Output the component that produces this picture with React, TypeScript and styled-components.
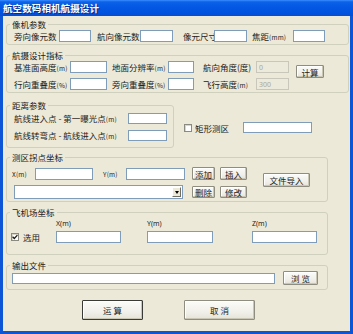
import React from 'react';
import styled, { createGlobalStyle } from 'styled-components';

const Global = createGlobalStyle`
  html, body { margin: 0; padding: 0; background: #ffffff; }
  body { font-family: "Noto Sans CJK SC", "Noto Sans", sans-serif; }
  * { box-sizing: border-box; }
`;

const Window = styled.div`
  width: 353px;
  height: 334px;
  background: #0b55d6;
  display: flex;
  flex-direction: column;
  overflow: hidden;
  position: relative;
`;

const TitleBar = styled.div`
  height: 16px;
  flex: none;
  background: linear-gradient(to bottom, #3b8dff 0%, #0b62e8 12%, #0457e3 45%, #0052df 80%, #0a4bd0 100%);
  color: #ffffff;
  font-size: 9.5px;
  font-weight: 700;
  line-height: 16px;
  padding-left: 3px;
  text-shadow: 1px 1px 0 #0a2a8a;
  letter-spacing: 0.1px;
`;

const Body = styled.div`
  flex: 1;
  margin: 0 3px 3px 3px;
  background: #ece9d8;
  padding: 3px 0 0 3px;
  display: flex;
  flex-direction: column;
  font-size: 8.5px;
  color: #222;
`;

const Group = styled.fieldset<{ $w: number; $mt?: number }>`
  width: ${p => p.$w}px;
  margin: ${p => p.$mt ?? 0}px 0 0 0;
  padding: 0;
  min-width: 0;
  border: 1px solid #d0d0bf;
  border-radius: 3px;
  flex: none;
`;

const Legend = styled.legend`
  font-size: 8.5px;
  line-height: 10px;
  padding: 0 2px;
  margin-left: 3px;
  color: #222;
`;

const Row = styled.div<{ $pt?: number; $pb?: number; $pl?: number; $h?: number }>`
  display: flex;
  align-items: center;
  padding: ${p => p.$pt ?? 0}px 0 ${p => p.$pb ?? 0}px ${p => p.$pl ?? 0}px;
  ${p => (p.$h ? `height: ${p.$h}px; box-sizing: content-box;` : '')}
`;

const Label = styled.span<{ $w?: number; $pl?: number; $ml?: number }>`
  ${p => (p.$w ? `width: ${p.$w}px;` : '')}
  padding-left: ${p => p.$pl ?? 0}px;
  margin-left: ${p => p.$ml ?? 0}px;
  flex: none;
  white-space: nowrap;
  line-height: 10px;
  font-size: 8.5px;
`;

const Unit = styled.span`
  font-size: 6.5px;
  letter-spacing: 0.2px;
`;

const Field = styled.input<{ $w: number; $h?: number; $ml?: number }>`
  width: ${p => p.$w}px;
  height: ${p => p.$h ?? 12}px;
  margin: 0 0 0 ${p => p.$ml ?? 0}px;
  padding: 0 2px;
  border: 1px solid #7f9db9;
  background: #ffffff;
  font-family: "Noto Sans", sans-serif;
  font-size: 7px;
  color: #000;
  flex: none;
  outline: none;
  &:disabled {
    background: #ebeadb;
    border-color: #c9c7ba;
    color: #aca899;
  }
`;

const Button = styled.button<{ $w: number; $h: number; $ml?: number; $mt?: number; $default?: boolean }>`
  width: ${p => p.$w}px;
  height: ${p => p.$h}px;
  margin: ${p => p.$mt ?? 0}px 0 0 ${p => p.$ml ?? 0}px;
  padding: 0;
  flex: none;
  font-family: inherit;
  font-size: 8.5px;
  line-height: 10px;
  color: #222;
  background: linear-gradient(to bottom, #fbfbf8 0%, #f1f0ea 60%, #e6e4d8 100%);
  border: 1px solid ${p => (p.$default ? '#3a3a36' : '#8f8d80')};
  border-radius: 1px;
  box-shadow: inset -1px -1px 0 #c9c6b6, inset 1px 1px 0 #ffffff;
  align-self: ${p => (p.$mt !== undefined ? 'flex-start' : 'center')};
`;

const Grid2 = styled.div`
  display: grid;
  grid-template-columns: 56px 37px 61px 26px 62px 33px;
  grid-auto-rows: 12px;
  row-gap: 5px;
  align-items: center;
`;

const Split = styled.div`
  display: flex;
  align-items: flex-start;
`;

const Side = styled.div<{ $mt: number; $ml: number }>`
  display: flex;
  align-items: center;
  height: 11px;
  margin: ${p => p.$mt}px 0 0 ${p => p.$ml}px;
`;

const Stack = styled.div<{ $gap: number }>`
  display: flex;
  flex-direction: column;
  gap: ${p => p.$gap}px;
`;

const CheckBox = styled.span<{ $ml?: number }>`
  width: 8px;
  height: 8px;
  margin-left: ${p => p.$ml ?? 0}px;
  flex: none;
  background: #ffffff;
  border: 1px solid #8a8a80;
  box-shadow: inset 1px 1px 0 #d8d6ca;
  display: flex;
  align-items: center;
  justify-content: center;
`;

const Combo = styled.div<{ $w: number; $ml?: number }>`
  width: ${p => p.$w}px;
  height: 14px;
  margin-left: ${p => p.$ml ?? 0}px;
  flex: none;
  background: #ffffff;
  border: 1px solid #7f9db9;
  display: flex;
  justify-content: flex-end;
  padding: 1px;
`;

const ComboArrow = styled.div`
  width: 9px;
  height: 100%;
  background: #ece9d8;
  border: 1px solid;
  border-color: #ffffff #716f64 #716f64 #ffffff;
  display: flex;
  align-items: center;
  justify-content: center;
  &::after {
    content: '';
    border-left: 2.5px solid transparent;
    border-right: 2.5px solid transparent;
    border-top: 3px solid #000;
  }
`;

const Col = styled.div<{ $ml: number }>`
  display: flex;
  flex-direction: column;
  gap: 2px;
  margin-left: ${p => p.$ml}px;
`;

const ColLabel = styled.span`
  font-size: 7px;
  line-height: 10px;
  font-family: "Noto Sans", sans-serif;
`;

const CheckWrap = styled.div`
  display: flex;
  align-items: center;
  height: 12px;
  align-self: flex-end;
`;

const Footer = styled.div`
  display: flex;
  padding-left: 76px;
  margin-top: 10px;
`;

const Check = () => (
  <svg width="6" height="6" viewBox="0 0 6 6">
    <path d="M0.6 2.8 L2.3 4.5 L5.4 1.1" fill="none" stroke="#1a1a1a" strokeWidth="1.3" />
  </svg>
);

const U = ({ children }: { children: React.ReactNode }) => <Unit>{children}</Unit>;

export default function App() {
  return (
    <>
      <Global />
      <Window>
        <TitleBar>航空数码相机航摄设计</TitleBar>
        <Body>
          <Group $w={343}>
            <Legend>像机参数</Legend>
            <Row $pt={1} $pb={2} $pl={7}>
              <Label $w={45}>旁向像元数</Label>
              <Field $w={32} />
              <Label $w={43} $ml={6}>航向像元数</Label>
              <Field $w={33} />
              <Label $w={31} $ml={10}>像元尺寸</Label>
              <Field $w={33} />
              <Label $w={41} $ml={5}>焦距<U>(mm)</U></Label>
              <Field $w={32} />
            </Row>
          </Group>

          <Group $w={343} $mt={5}>
            <Legend>航摄设计指标</Legend>
            <Row $pt={1} $pb={2} $pl={7}>
              <Grid2>
                <Label>基准面高度<U>(m)</U></Label>
                <Field $w={37} />
                <Label $pl={5}>地面分辨率<U>(m)</U></Label>
                <Field $w={26} />
                <Label $pl={9}>航向角度(度)</Label>
                <Field $w={33} disabled defaultValue="0" />
                <Label>行向重叠度<U>(%)</U></Label>
                <Field $w={37} />
                <Label $pl={5}>旁向重叠度<U>(%)</U></Label>
                <Field $w={26} />
                <Label $pl={9}>飞行高度<U>(m)</U></Label>
                <Field $w={33} disabled defaultValue="300" />
              </Grid2>
              <Button $w={28} $h={13} $ml={7} $mt={4}>计算</Button>
            </Row>
          </Group>

          <Split>
            <Group $w={168} $mt={7}>
              <Legend>距离参数</Legend>
              <Stack $gap={6} style={{ padding: '3px 0 6px 7px' }}>
                <Row>
                  <Label $w={114}>航线进入点 - 第一曝光点<U>(m)</U></Label>
                  <Field $w={39} $h={11} />
                </Row>
                <Row>
                  <Label $w={114}>航线转弯点 - 航线进入点<U>(m)</U></Label>
                  <Field $w={39} $h={11} />
                </Row>
              </Stack>
            </Group>
            <Side $mt={29} $ml={10}>
              <CheckBox />
              <Label $w={48} $ml={3}>矩形测区</Label>
              <Field $w={69} $h={11} />
            </Side>
          </Split>

          <Group $w={322} $mt={4}>
            <Legend>测区拐点坐标</Legend>
            <Split>
              <Stack $gap={5} style={{ padding: '5px 0 2px 5px' }}>
                <Row $h={13}>
                  <Label $w={23}><U>X(m)</U></Label>
                  <Field $w={58} />
                  <Label $w={23} $ml={10}><U>Y(m)</U></Label>
                  <Field $w={59} />
                  <Button $w={23} $h={13} $ml={7}>添加</Button>
                  <Button $w={27} $h={13} $ml={5}>插入</Button>
                </Row>
                <Row $h={14}>
                  <Combo $w={169} $ml={2}>
                    <ComboArrow />
                  </Combo>
                  <Button $w={23} $h={12} $ml={9}>删除</Button>
                  <Button $w={27} $h={12} $ml={5}>修改</Button>
                </Row>
              </Stack>
              <Button $w={47} $h={14} $ml={16} $mt={11}>文件导入</Button>
            </Split>
          </Group>

          <Group $w={322} $mt={5}>
            <Legend>飞机场坐标</Legend>
            <Row $pt={2} $pb={11} $pl={4} style={{ alignItems: 'flex-end' }}>
              <CheckWrap>
                <CheckBox><Check /></CheckBox>
                <Label $ml={4}>选用</Label>
              </CheckWrap>
              <Col $ml={16}>
                <ColLabel>X(m)</ColLabel>
                <Field $w={65} />
              </Col>
              <Col $ml={26}>
                <ColLabel>Y(m)</ColLabel>
                <Field $w={66} />
              </Col>
              <Col $ml={39}>
                <ColLabel>Z(m)</ColLabel>
                <Field $w={65} />
              </Col>
            </Row>
          </Group>

          <Group $w={322} $mt={5}>
            <Legend>输出文件</Legend>
            <Row $pt={1} $pb={4} $pl={5} $h={14}>
              <Field $w={263} $h={11} />
              <Button $w={35} $h={14} $ml={8}>浏 览</Button>
            </Row>
          </Group>

          <Footer>
            <Button $w={61} $h={20} $default>运 算</Button>
            <Button $w={71} $h={20} $ml={41}>取 消</Button>
          </Footer>
        </Body>
      </Window>
    </>
  );
}
